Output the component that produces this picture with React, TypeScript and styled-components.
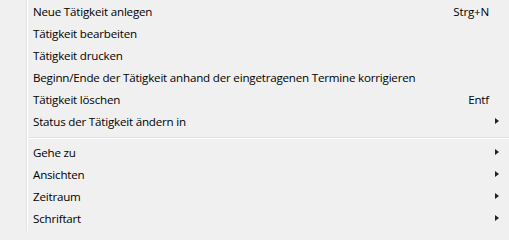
import React from "react";
import styled, { createGlobalStyle } from "styled-components";

const Global = createGlobalStyle`
  html, body { margin: 0; padding: 0; background: #f0f0f0; }
  body { font-family: "Open Sans", "Noto Sans", sans-serif; }
`;

const Menu = styled.div`
  position: relative;
  width: 509px;
  height: 231px;
  background: #f0f0f0;
  display: flex;
  flex-direction: column;
  font-family: "Open Sans", "Noto Sans", sans-serif;
  font-size: 11.6px;
  letter-spacing: -0.2px;
  color: #000;
  overflow: hidden;
`;

const Gutter = styled.div`
  position: absolute;
  top: 0;
  bottom: 0;
  left: 26px;
  width: 1px;
  background: #e2e3e3;
  border-right: 1px solid #ffffff;
`;

const Row = styled.div`
  height: 22px;
  display: flex;
  align-items: center;
  padding-left: 33px;
  padding-right: 20px;
  white-space: nowrap;
`;

const Label = styled.span`
  flex: 1;
`;

const Shortcut = styled.span``;

const Arrow = styled.span`
  width: 0;
  height: 0;
  margin-right: -10px;
  border-top: 3.5px solid transparent;
  border-bottom: 3.5px solid transparent;
  border-left: 4px solid #222;
`;

const Separator = styled.div`
  height: 9px;
  display: flex;
  align-items: flex-start;
  padding-left: 28px;
  &::before {
    content: "";
    display: block;
    margin-top: 5px;
    width: 100%;
    height: 1px;
    background: #e2e3e3;
    border-bottom: 1px solid #ffffff;
  }
`;

type Item = { label: string; shortcut?: string; sub?: boolean } | "sep";

const items: Item[] = [
  { label: "Neue Tätigkeit anlegen", shortcut: "Strg+N" },
  { label: "Tätigkeit bearbeiten" },
  { label: "Tätigkeit drucken" },
  { label: "Beginn/Ende der Tätigkeit anhand der eingetragenen Termine korrigieren" },
  { label: "Tätigkeit löschen", shortcut: "Entf" },
  { label: "Status der Tätigkeit ändern in", sub: true },
  "sep",
  { label: "Gehe zu", sub: true },
  { label: "Ansichten", sub: true },
  { label: "Zeitraum", sub: true },
  { label: "Schriftart", sub: true },
];

export default function App() {
  return (
    <>
      <Global />
      <Menu>
        <Gutter />
        {items.map((it, i) =>
          it === "sep" ? (
            <Separator key={i} />
          ) : (
            <Row key={i}>
              <Label>{it.label}</Label>
              {it.shortcut && <Shortcut>{it.shortcut}</Shortcut>}
              {it.sub && <Arrow />}
            </Row>
          )
        )}
      </Menu>
    </>
  );
}
